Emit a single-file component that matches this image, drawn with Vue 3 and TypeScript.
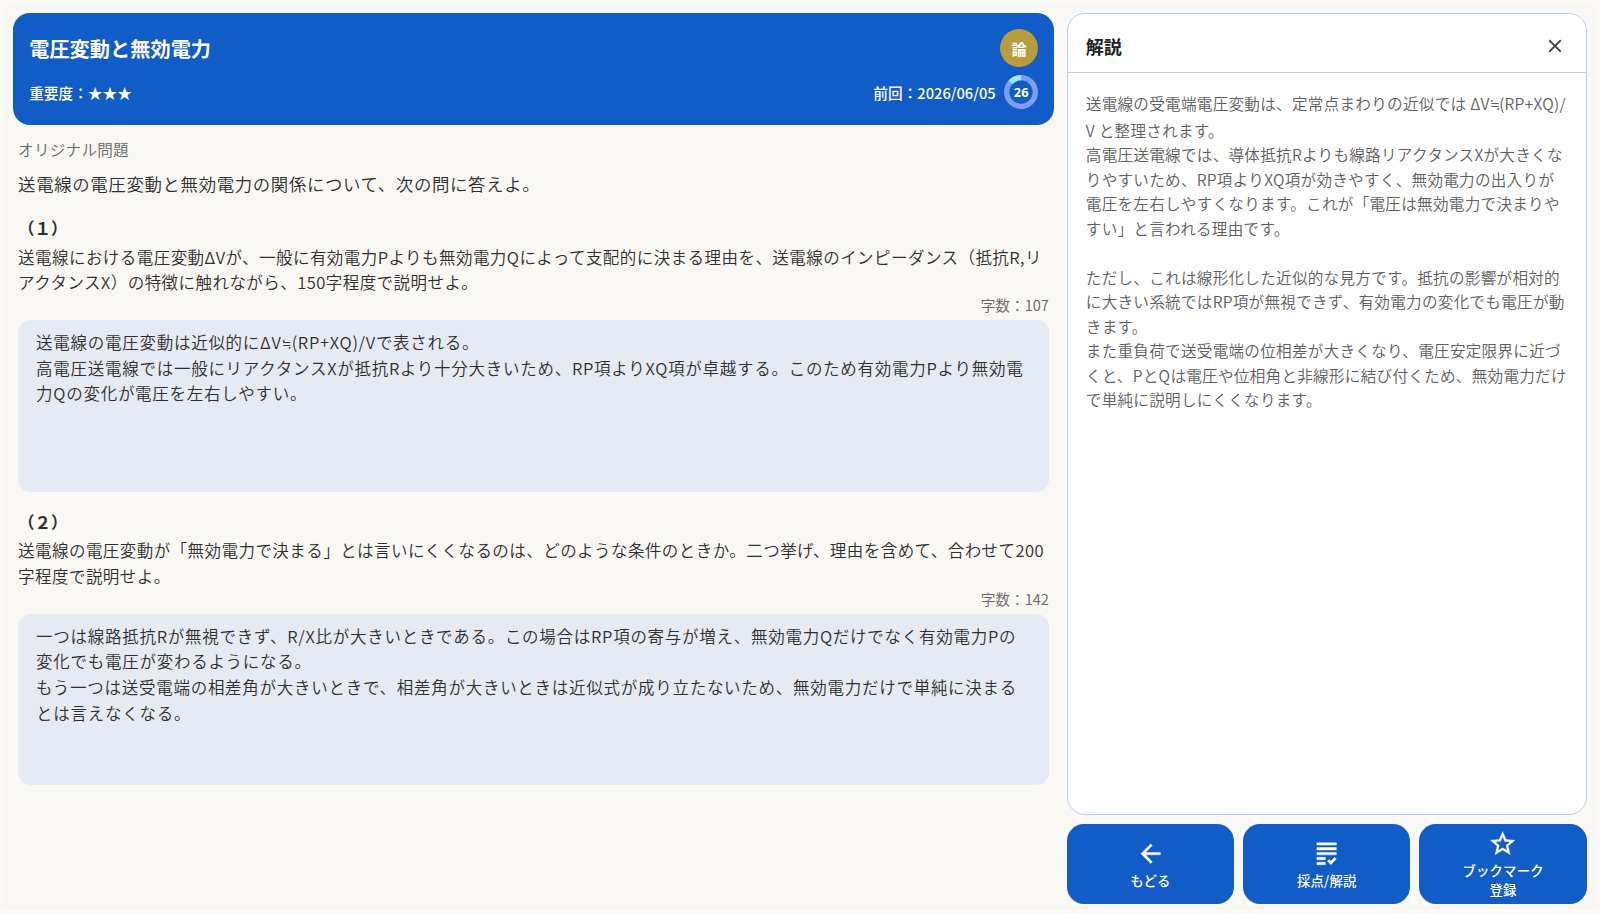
<script setup lang="ts">
interface Question {
  no: string
  text: string
  count: number
  answer: string[]
}

const questions: Question[] = [
  {
    no: '（１）',
    text: '送電線における電圧変動ΔVが、一般に有効電力Pよりも無効電力Qによって支配的に決まる理由を、送電線のインピーダンス（抵抗R,リアクタンスX）の特徴に触れながら、150字程度で説明せよ。',
    count: 107,
    answer: [
      '送電線の電圧変動は近似的にΔV≒(RP+XQ)/Vで表される。',
      '高電圧送電線では一般にリアクタンスXが抵抗Rより十分大きいため、RP項よりXQ項が卓越する。このため有効電力Pより無効電力Qの変化が電圧を左右しやすい。',
    ],
  },
  {
    no: '（２）',
    text: '送電線の電圧変動が「無効電力で決まる」とは言いにくくなるのは、どのような条件のときか。二つ挙げ、理由を含めて、合わせて200字程度で説明せよ。',
    count: 142,
    answer: [
      '一つは線路抵抗Rが無視できず、R/X比が大きいときである。この場合はRP項の寄与が増え、無効電力Qだけでなく有効電力Pの変化でも電圧が変わるようになる。',
      'もう一つは送受電端の相差角が大きいときで、相差角が大きいときは近似式が成り立たないため、無効電力だけで単純に決まるとは言えなくなる。',
    ],
  },
]

// Each entry is one visual line; the flag marks the taller line that holds the ≒ sign.
const explanation: { text: string; tall?: boolean }[] = [
  { text: '送電線の受電端電圧変動は、定常点まわりの近似では ΔV≒(RP+XQ)/', tall: true },
  { text: 'V と整理されます。' },
  { text: '高電圧送電線では、導体抵抗Rよりも線路リアクタンスXが大きくな' },
  { text: 'りやすいため、RP項よりXQ項が効きやすく、無効電力の出入りが' },
  { text: '電圧を左右しやすくなります。これが「電圧は無効電力で決まりや' },
  { text: 'すい」と言われる理由です。' },
  { text: '' },
  { text: 'ただし、これは線形化した近似的な見方です。抵抗の影響が相対的' },
  { text: 'に大きい系統ではRP項が無視できず、有効電力の変化でも電圧が動' },
  { text: 'きます。' },
  { text: 'また重負荷で送受電端の位相差が大きくなり、電圧安定限界に近づ' },
  { text: 'くと、PとQは電圧や位相角と非線形に結び付くため、無効電力だけ' },
  { text: 'で単純に説明しにくくなります。' },
]

const score = 26
const ringLength = 2 * Math.PI * 14.3
const arc = ringLength * 0.13

function parts(line: string): string[] {
  return line.split(/(≒)/).filter((p) => p !== '')
}
</script>

<template>
  <div class="page">
    <main class="left">
      <header class="hero">
        <div class="hero-row top">
          <h1>電圧変動と無効電力</h1>
          <span class="badge">論</span>
        </div>
        <div class="hero-row bottom">
          <span>重要度：★★★</span>
          <div class="last">
            <span>前回：2026/06/05</span>
            <div class="ring">
              <svg viewBox="0 0 34 34">
                <circle cx="17" cy="17" r="14.3" fill="none" stroke="#7d9ffb" stroke-width="5.3" />
                <circle
                  cx="17" cy="17" r="14.3" fill="none" stroke="#a3e4fd" stroke-width="5.3"
                  :stroke-dasharray="`${arc} ${ringLength}`"
                  transform="rotate(-136.8 17 17)"
                />
              </svg>
              <b>{{ score }}</b>
            </div>
          </div>
        </div>
      </header>

      <div class="body">
        <p class="source">オリジナル問題</p>
        <p class="lead">送電線の電圧変動と無効電力の関係について、次の問に答えよ。</p>
        <section v-for="q in questions" :key="q.no" class="question">
          <h2>{{ q.no }}</h2>
          <p class="text">{{ q.text }}</p>
          <div class="count">字数：{{ q.count }}</div>
          <div class="answer">
            <p v-for="(line, i) in q.answer" :key="i"><template v-for="(p, j) in parts(line)" :key="j"><span v-if="p === '≒'" class="approx">≒</span><template v-else>{{ p }}</template></template></p>
          </div>
        </section>
      </div>
    </main>

    <aside class="right">
      <section class="panel">
        <div class="panel-head">
          <h2>解説</h2>
          <svg class="close" viewBox="0 0 24 24"><path fill="#444746" d="M19 6.41L17.59 5 12 10.59 6.41 5 5 6.41 10.59 12 5 17.59 6.41 19 12 13.41 17.59 19 19 17.59 13.41 12z" /></svg>
        </div>
        <div class="panel-body">
          <p v-for="(line, i) in explanation" :key="i" :class="{ tall: line.tall }"><template v-for="(p, j) in parts(line.text)" :key="j"><span v-if="p === '≒'" class="approx">≒</span><template v-else>{{ p }}</template></template></p>
        </div>
      </section>
      <nav class="actions">
        <button type="button">
          <svg viewBox="0 0 24 24"><path d="M20 11H7.83l5.59-5.59L12 4l-8 8 8 8 1.41-1.41L7.83 13H20z" /></svg>
          <span>もどる</span>
        </button>
        <button type="button">
          <svg viewBox="0 0 24 24"><path d="M4 7h16v2H4V7zm0 6h16v-2H4v2zm0 4h7v-2H4v2zm0 4h7v-2H4v2zm11.41-2.83L14 16.75l-1.41 1.41L15.41 21 20 16.42 18.58 15l-3.17 3.17zM4 3v2h16V3H4z" /></svg>
          <span>採点/解説</span>
        </button>
        <button type="button">
          <svg viewBox="0 0 24 24"><path d="M22 9.24l-7.19-.62L12 2 9.19 8.63 2 9.24l5.46 4.73L5.82 21 12 17.27 18.18 21l-1.63-7.03zM12 15.4l-3.76 2.27 1-4.28-3.32-2.88 4.38-.38L12 6.1l1.71 4.04 4.38.38-3.32 2.88 1 4.28z" /></svg>
          <span>ブックマーク<br />登録</span>
        </button>
      </nav>
    </aside>
  </div>
</template>

<style>
body {
  background: #faf8f4;
}
</style>

<style scoped>
.page {
  box-sizing: border-box;
  display: flex;
  gap: 13px;
  width: 1600px;
  height: 913px;
  padding: 13.4px 13px 9px 13.4px;
  overflow: hidden;
  background: #faf8f4;
  box-shadow: inset 0 0 0 1px #faf8f4, inset 0 0 0 2px #fefdfb;
  font-family: "Noto Sans CJK JP", sans-serif;
  font-weight: 350;
  color: #2e2e2e;
}
h1, h2, p {
  margin: 0;
}
.left {
  width: 1040.4px;
}
.hero {
  box-sizing: border-box;
  height: 111.3px;
  padding: 15.3px 15.6px 0 15.8px;
  border-radius: 17px;
  background: #115cc7;
  color: #fff;
}
.hero-row {
  display: flex;
  justify-content: space-between;
  align-items: center;
}
.hero-row.top {
  height: 38px;
}
.hero h1 {
  padding-top: 3px;
  font-size: 20.17px;
  letter-spacing: 0.05px;
  line-height: 30px;
  font-weight: 700;
}
.badge {
  width: 38px;
  height: 38px;
  border-radius: 50%;
  background: #b79d3c;
  font-size: 15.2px;
  font-weight: 700;
  line-height: 39px;
  text-align: center;
}
.hero-row.bottom {
  height: 34px;
  margin-top: 8.6px;
  font-size: 14.67px;
  font-weight: 500;
}
.last {
  display: flex;
  align-items: center;
  gap: 8.6px;
}
.ring {
  display: grid;
  width: 34px;
  height: 34px;
}
.ring svg,
.ring b {
  grid-area: 1 / 1;
}
.ring b {
  font: 700 12.8px/35px "Open Sans", sans-serif;
  text-align: center;
}
.body {
  padding: 12px 5px 0 4.7px;
}
.source {
  font-size: 15.58px;
  letter-spacing: 0.26px;
  line-height: 24px;
  color: #666;
}
.lead {
  margin-top: 9.3px;
  font-size: 17.42px;
  letter-spacing: 0.65px;
  line-height: 28px;
}
.question {
  height: 293.6px;
}
.question h2 {
  padding-top: 17.1px;
  font-size: 16.5px;
  line-height: 26px;
  font-weight: 700;
}
.text {
  margin-top: 3.5px;
  font-size: 16.5px;
  letter-spacing: 0.45px;
  line-height: 25.67px;
  word-break: break-all;
}
.count {
  height: 20px;
  margin-top: -1.8px;
  font-size: 14.67px;
  line-height: 22px;
  text-align: right;
  color: #666;
}
.answer {
  box-sizing: border-box;
  height: 171.5px;
  margin-top: 6px;
  padding: 10px 18px;
  border-radius: 13px;
  background: #e6ebf3;
  font-size: 16.5px;
  letter-spacing: 0.73px;
  line-height: 25.6px;
}
.approx {
  display: inline-block;
  width: 0.61em;
  font-family: "DejaVu Sans", sans-serif;
  font-weight: 200;
  letter-spacing: 0;
  line-height: 1;
  transform: scaleX(0.74);
  transform-origin: left center;
}
.answer .approx {
  width: 10.1px;
  font-size: 15.4px;
}
.right {
  width: 520px;
  display: flex;
  flex-direction: column;
  gap: 9.2px;
}
.panel {
  box-sizing: border-box;
  height: 801.4px;
  border: 1px solid #b5cef0;
  border-radius: 18px;
  background: #fff;
}
.panel-head {
  box-sizing: border-box;
  display: flex;
  justify-content: space-between;
  align-items: center;
  height: 59px;
  padding: 5px 20px 0 18px;
  border-bottom: 1px solid #c5cad8;
}
.panel-head h2 {
  font-size: 18px;
  line-height: 28px;
  color: #222;
}
.close {
  width: 22px;
  height: 22px;
}
.panel-body {
  padding: 16.6px 18px 0;
  font-size: 15.58px;
  letter-spacing: 0.28px;
  color: #606060;
}
.panel-body p {
  height: 24.5px;
  line-height: 24.5px;
  white-space: nowrap;
}
.panel-body p.tall {
  height: 27.7px;
  line-height: 27px;
}
.actions {
  display: flex;
  gap: 9px;
}
.actions button {
  flex: 1;
  display: flex;
  flex-direction: column;
  align-items: center;
  justify-content: center;
  gap: 2.4px;
  height: 80px;
  padding: 0.6px 0 0;
  border: 0;
  border-radius: 17px;
  background: #115cc7;
  color: #fff;
  font: 500 13.4px/19px "Noto Sans CJK JP", sans-serif;
  letter-spacing: 0.15px;
}
.actions svg {
  width: 29.3px;
  height: 29.3px;
  fill: #fff;
  stroke: #fff;
  stroke-width: 0.3;
}
</style>
